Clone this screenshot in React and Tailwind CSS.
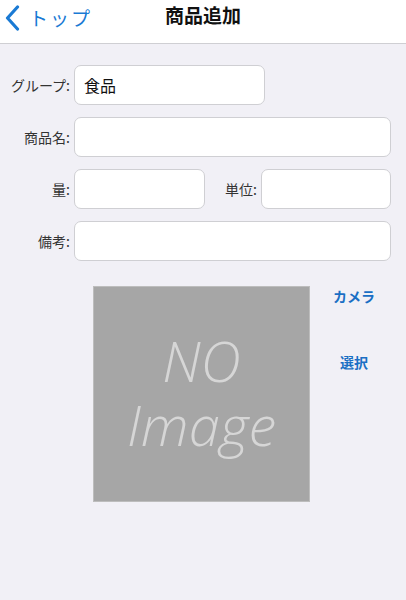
import React from 'react';

const font = { fontFamily: '"Noto Sans CJK JP", "Noto Sans", sans-serif' };
const imgFont = { fontFamily: '"Open Sans", "Liberation Sans", sans-serif', fontWeight: 300 };

const Field = ({ value, className = '' }) => (
  <div className={`h-[40px] rounded-[7px] border border-[#cfcfd3] bg-white px-[9px] flex items-center text-[16px] text-[#111] ${className}`}>
    {value}
  </div>
);

const Label = ({ children, className = '' }) => (
  <div className={`text-[14px] text-[#333] text-right pr-[4px] ${className}`}>{children}</div>
);

export default function App() {
  return (
    <div className="w-[406px] h-[600px] bg-[#f1f0f6] overflow-hidden" style={font}>
      {/* nav bar */}
      <div className="h-[44px] bg-white border-b border-[#cfcfd3] flex items-center relative">
        <div className="flex items-center pl-[5px] -mt-[8px] text-[#1a7ad4]">
          <svg width="15" height="26" viewBox="0 0 15 26" fill="none">
            <path d="M12.5 2 L2.5 13 L12.5 24" stroke="#1a7ad4" strokeWidth="3.2" strokeLinecap="round" strokeLinejoin="round" />
          </svg>
          <span className="ml-[9px] text-[19px] leading-none tracking-[2px]">トップ</span>
        </div>
        <div className="absolute left-0 right-0 top-0 h-[30px] flex items-center justify-center text-[19px] font-bold text-[#111] pointer-events-none">
          商品追加
        </div>
      </div>

      {/* form */}
      <div className="pt-[21px] pr-[15px] flex flex-col gap-[12px]">
        <div className="flex items-center">
          <Label className="w-[74px]">グループ:</Label>
          <Field value="食品" className="w-[191px]" />
        </div>
        <div className="flex items-center">
          <Label className="w-[74px]">商品名:</Label>
          <Field className="flex-1" />
        </div>
        <div className="flex items-center">
          <Label className="w-[74px]">量:</Label>
          <Field className="w-[131px]" />
          <Label className="w-[56px]">単位:</Label>
          <Field className="flex-1" />
        </div>
        <div className="flex items-center">
          <Label className="w-[74px]">備考:</Label>
          <Field className="flex-1" />
        </div>
      </div>

      {/* image area */}
      <div className="flex mt-[25px] pl-[93px]">
        <div className="w-[217px] h-[216px] bg-[#a6a6a6] border border-[#bdbdbd] flex items-center justify-center">
          <div className="text-[#d6d6d6] italic text-[56px] leading-[64px] text-center -mt-[4px]" style={imgFont}>
            NO<br />Image
          </div>
        </div>
        <div className="flex-1 flex flex-col items-center pr-[8px] text-[#1a6fc4] font-bold text-[14px]">
          <div>カメラ</div>
          <div className="mt-[45px]">選択</div>
        </div>
      </div>
    </div>
  );
}
